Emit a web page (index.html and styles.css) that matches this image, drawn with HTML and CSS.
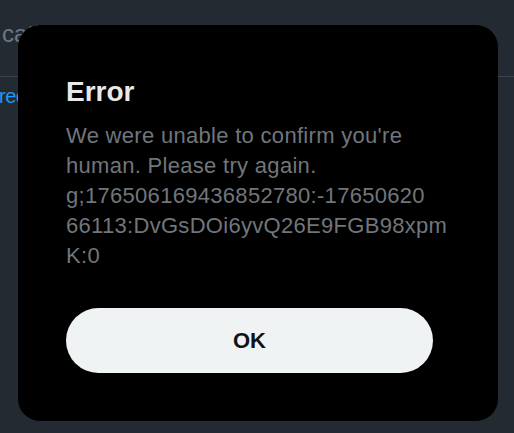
FILE: index.html
```html
<!DOCTYPE html>
<html lang="en">
<head>
    <meta charset="UTF-8">
    <meta name="viewport" content="width=device-width, initial-scale=1.0">
    <title>Error</title>
    <link rel="stylesheet" href="styles.css">
</head>
<body>
    <div class="page">
        <div class="page-header">cation</div>
        <div class="page-link">recover</div>
    </div>

    <div class="modal">
        <h1>Error</h1>
        <p class="message">We were unable to confirm you're human. Please try again.<br>g;176506169436852780:-17650620<br>66113:DvGsDOi6yvQ26E9FGB98xpm<br>K:0</p>
        <button class="ok-btn">OK</button>
    </div>
</body>
</html>
```

FILE: styles.css
```css
html, body {
    height: 100%;
}
body {
    margin: 0;
    background-color: #242a31;
    font-family: "Liberation Sans", Arial, sans-serif;
    overflow: hidden;
}
.page-header {
    height: 57px;
    padding: 19px 0 0 2px;
    font-size: 24px;
    line-height: 30px;
    color: #6e7881;
    border-bottom: 1px solid #3a4450;
}
.page-link {
    margin-top: 7px;
    margin-left: -1px;
    font-size: 20px;
    line-height: 24px;
    letter-spacing: -0.5px;
    color: #1d9bf0;
}
.modal {
    position: absolute;
    left: 18px;
    top: 25px;
    width: 480px;
    box-sizing: border-box;
    padding: 51px 48px 48px;
    background-color: #000;
    border-radius: 22px;
}
.modal h1 {
    margin: 0;
    font-size: 28px;
    line-height: 32px;
    font-weight: bold;
    color: #e7e9ea;
}
.message {
    margin: 13px 0 0;
    font-size: 22px;
    line-height: 30px;
    letter-spacing: 0.3px;
    color: #71767b;
}
.ok-btn {
    display: block;
    margin-top: 37px;
    width: 367px;
    height: 65px;
    border: none;
    border-radius: 33px;
    background-color: #eff3f4;
    color: #0f1419;
    font-family: "Liberation Sans", Arial, sans-serif;
    font-size: 22px;
    font-weight: bold;
    cursor: pointer;
}
```
